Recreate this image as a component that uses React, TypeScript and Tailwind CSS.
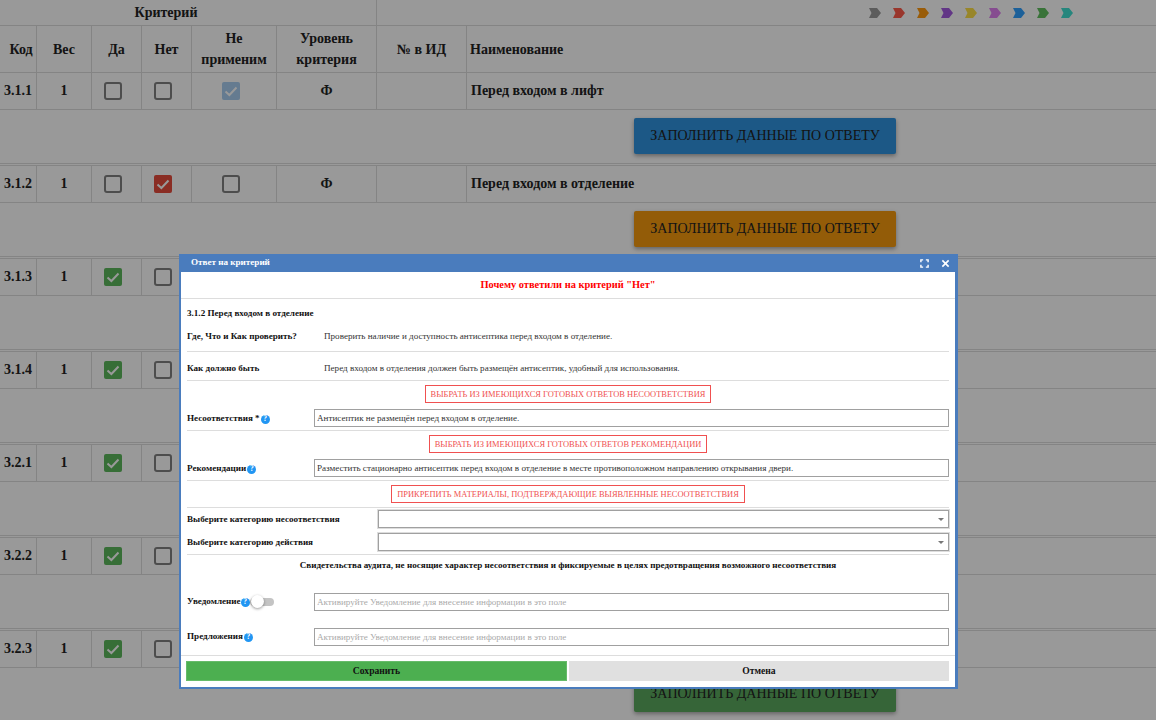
import React from "react";

type Mark = "none" | "yes" | "no" | "na";

const rows: { code: string; mark: Mark; name: string; btn: string }[] = [
  { code: "3.1.1", mark: "na", name: "Перед входом в лифт", btn: "bg-[#2f93e0]" },
  { code: "3.1.2", mark: "no", name: "Перед входом в отделение", btn: "bg-[#f59a0e]" },
  { code: "3.1.3", mark: "yes", name: "", btn: "bg-[#4caf50]" },
  { code: "3.1.4", mark: "yes", name: "", btn: "bg-[#4caf50]" },
  { code: "3.2.1", mark: "yes", name: "", btn: "bg-[#4caf50]" },
  { code: "3.2.2", mark: "yes", name: "", btn: "bg-[#4caf50]" },
  { code: "3.2.3", mark: "yes", name: "", btn: "bg-[#5aa85e]" },
];

const chevrons = ["#9a9a9a", "#ff5a4a", "#ff9a10", "#a45be0", "#fde047", "#e080f0", "#30a0ff", "#60c060", "#40e0d0"];

function Box({ kind }: { kind: "empty" | "green" | "red" | "blue" }) {
  if (kind === "empty") {
    return <span className="block h-[18px] w-[18px] rounded-[3px] border-2 border-[#808080] box-border" />;
  }
  const bg = kind === "green" ? "bg-[#5cb85c]" : kind === "red" ? "bg-[#e74c3c]" : "bg-[#a8cdf0]";
  return (
    <span className={`flex h-[18px] w-[18px] items-center justify-center rounded-[2px] ${bg}`}>
      <svg viewBox="0 0 18 18" className="h-[18px] w-[18px]" fill="none" stroke="#fff" strokeWidth="2">
        <path d="M3.5 9.5 L7.4 13 L14.5 5.5" />
      </svg>
    </span>
  );
}

function Help({ extra = "" }: { extra?: string }) {
  return (
    <span className={`inline-flex h-[9px] w-[9px] shrink-0 items-start justify-center rounded-full bg-[#2196f3] text-[7.5px] font-bold leading-[8px] text-white ${extra}`}>
      ?
    </span>
  );
}

function Cell({ w, children, extra = "" }: { w: string; children?: React.ReactNode; extra?: string }) {
  return <div className={`flex shrink-0 items-center justify-center border-r border-[#ddd] ${w} ${extra}`}>{children}</div>;
}

function Row({ r, last }: { r: (typeof rows)[number]; last: boolean }) {
  return (
    <div>
      <div className="flex h-[37px] border-b border-[#ddd] text-[14px]">
        <Cell w="w-[37px]" extra="pb-[2px] font-bold">{r.code}</Cell>
        <Cell w="w-[55px]" extra="pb-[2px] font-bold">1</Cell>
        <Cell w="w-[50px]" extra="pr-[7px]"><Box kind={r.mark === "yes" ? "green" : "empty"} /></Cell>
        <Cell w="w-[50px]" extra="pr-[7px]"><Box kind={r.mark === "no" ? "red" : "empty"} /></Cell>
        <Cell w="w-[85px]" extra="pr-[7px]">{r.mark === "yes" ? null : <Box kind={r.mark === "na" ? "blue" : "empty"} />}</Cell>
        <Cell w="w-[100px]" extra="pb-[2px] font-bold">{r.mark === "yes" ? "" : "Ф"}</Cell>
        <Cell w="w-[90px]" />
        <div className="flex flex-1 items-center pb-[2px] pl-[4px] font-bold">{r.name}</div>
      </div>
      <div className="flex h-[54px] items-start justify-center border-b border-[#ddd] pl-[374px] pt-[8px]">
        <button className={`flex h-[36px] w-[262px] items-center justify-center rounded-[2px] pb-[2px] text-[14px] text-[#222] shadow-[0_2px_4px_rgba(0,0,0,0.35)] ${r.btn}`}>
          ЗАПОЛНИТЬ ДАННЫЕ ПО ОТВЕТУ
        </button>
      </div>
      {last ? null : <div className="h-[2px] border-b border-[#ddd]" />}
    </div>
  );
}

function RedButton({ children, pb }: { children: React.ReactNode; pb: string }) {
  return (
    <div className={`flex justify-center pt-[4px] ${pb}`}>
      <button className="flex h-[18px] items-center border border-[#f05050] bg-white px-[5px] text-[8.45px] leading-none text-[#f05050]">
        {children}
      </button>
    </div>
  );
}

const inputCls =
  "h-[18px] min-w-0 flex-1 border border-[#a0a0a0] bg-white px-[2px] text-[9.1px] text-[#333] outline-none placeholder:text-[#aaa] font-['Liberation_Serif',serif]";

function Select() {
  return (
    <div className="relative h-[18px] min-w-0 flex-1 border border-[#a0a0a0] bg-white shadow-[0_0_0_1px_#ddd]">
      <span className="absolute right-[4px] top-[7px] h-0 w-0 border-x-[3.5px] border-t-[3.5px] border-x-transparent border-t-[#777]" />
    </div>
  );
}

export default function App() {
  return (
    <div className="relative h-[720px] w-[1156px] overflow-hidden bg-white font-['Liberation_Serif',serif] text-[#222]">
      {/* background table */}
      <div className="flex h-[26px] border-b border-[#ddd] text-[14px] font-bold">
        <div className="flex w-[377px] items-center justify-center border-r border-[#ddd] pr-[44px]">Критерий</div>
        <div className="flex flex-1 items-center gap-[12px] pl-[492px]">
          {chevrons.map((c) => (
            <svg key={c} viewBox="0 0 12 10" className="h-[10px] w-[12px]" fill={c}>
              <path d="M0 0 H8 L12 5 L8 10 H0 L2.5 5 Z" />
            </svg>
          ))}
        </div>
      </div>
      <div className="flex h-[47px] border-b border-[#ddd] text-[14px] font-bold leading-[21px]">
        <Cell w="w-[37px]" extra="pl-[6px]">Код</Cell>
        <Cell w="w-[55px]">Вес</Cell>
        <Cell w="w-[50px]">Да</Cell>
        <Cell w="w-[50px]">Нет</Cell>
        <Cell w="w-[85px]" extra="text-center">Не<br />применим</Cell>
        <Cell w="w-[100px]" extra="text-center">Уровень<br />критерия</Cell>
        <Cell w="w-[90px]">№ в ИД</Cell>
        <div className="flex flex-1 items-center pl-[3px]">Наименование</div>
      </div>
      {rows.map((r, i) => (
        <Row key={r.code} r={r} last={i === rows.length - 1} />
      ))}

      {/* dim overlay */}
      <div className="absolute inset-0 bg-black/40" />

      {/* dialog */}
      <div className="absolute left-[179px] top-[254px] flex h-[435px] w-[779px] flex-col overflow-hidden border-2 border-r-[3px] border-t-0 border-[#4a7cbd] bg-white text-[10px] text-[#111]">
        <div className="flex h-[18px] shrink-0 items-center justify-between bg-[#4a7cbd] pl-[10px] pr-[5px] text-[9.1px] font-bold text-white">
          <span>Ответ на критерий</span>
          <span className="flex items-center gap-[12px]">
            <svg viewBox="0 0 10 10" className="h-[9px] w-[9px]" fill="none" stroke="#fff" strokeWidth="1.6">
              <path d="M1 3.5 V1 H3.5 M6.5 1 H9 V3.5 M9 6.5 V9 H6.5 M3.5 9 H1 V6.5" />
            </svg>
            <svg viewBox="0 0 10 10" className="h-[9px] w-[9px]" fill="none" stroke="#fff" strokeWidth="1.8">
              <path d="M1.5 1.5 L8.5 8.5 M8.5 1.5 L1.5 8.5" />
            </svg>
          </span>
        </div>
        <div className="flex h-[27px] shrink-0 items-center justify-center border-b border-[#ddd] text-[10.4px] font-bold text-[#ff0000]">
          Почему ответили на критерий "Нет"
        </div>
        <div className="px-[6px]">
          <div className="h-[22px] pt-[8px] text-[9.1px] font-bold leading-[12px]">3.1.2 Перед входом в отделение</div>
          <div className="flex h-[31px] items-center border-b border-[#ddd] pt-[2px] text-[9.1px]">
            <span className="w-[137px] shrink-0 font-bold">Где, Что и Как проверить?</span>
            <span className="text-[#333]">Проверить наличие и доступность антисептика перед входом в отделение.</span>
          </div>
          <div className="flex h-[29px] items-center border-b border-[#ddd] pt-[5px] text-[9.1px]">
            <span className="w-[137px] shrink-0 font-bold">Как должно быть</span>
            <span className="text-[#333]">Перед входом в отделения должен быть размещён антисептик, удобный для использования.</span>
          </div>
          <RedButton pb="pb-[6px]">ВЫБРАТЬ ИЗ ИМЕЮЩИХСЯ ГОТОВЫХ ОТВЕТОВ НЕСООТВЕТСТВИЯ</RedButton>
          <div className="flex h-[22px] items-start border-b border-[#ddd]">
            <span className="flex h-[18px] w-[127px] shrink-0 items-center gap-[1px] pt-[2px] text-[9.1px] font-bold">Несоответствия * <Help /></span>
            <input readOnly className={inputCls} value="Антисептик не размещён перед входом в отделение." />
          </div>
          <RedButton pb="pb-[6px]">ВЫБРАТЬ ИЗ ИМЕЮЩИХСЯ ГОТОВЫХ ОТВЕТОВ РЕКОМЕНДАЦИИ</RedButton>
          <div className="flex h-[22px] items-start border-b border-[#ddd]">
            <span className="flex h-[18px] w-[127px] shrink-0 items-center pt-[2px] text-[9.1px] font-bold">Рекомендации<Help extra="ml-[1px]" /></span>
            <input readOnly className={inputCls} value="Разместить стационарно антисептик перед входом в отделение в месте противоположном направлению открывания двери." />
          </div>
          <div className="border-b border-[#ddd]">
            <RedButton pb="pb-[4px]">ПРИКРЕПИТЬ МАТЕРИАЛЫ, ПОДТВЕРЖДАЮЩИЕ ВЫЯВЛЕННЫЕ НЕСООТВЕТСТВИЯ</RedButton>
          </div>
          <div className="flex items-center pb-[5px] pt-[2px]">
            <span className="w-[191px] shrink-0 pt-[2px] text-[9.1px] font-bold">Выберите категорию несоответствия</span>
            <Select />
          </div>
          <div className="flex items-center border-b border-[#ddd] pb-[3px]">
            <span className="w-[191px] shrink-0 pt-[2px] text-[9.1px] font-bold">Выберите категорию действия</span>
            <Select />
          </div>
          <div className="flex h-[22px] items-center justify-center text-[9.1px] font-bold">
            Свидетельства аудита, не носящие характер несоответствия и фиксируемые в целях предотвращения возможного несоответствия
          </div>
          <div className="mt-[16px] flex items-center">
            <span className="flex h-[18px] w-[127px] shrink-0 items-center text-[9.1px] font-bold">
              Уведомление<Help />
              <span className="relative h-[8px] w-[24px] rounded-full bg-[#c4c4c4]">
                <span className="absolute left-[1px] top-[-3px] h-[13px] w-[13px] rounded-full bg-white shadow-[0_1px_3px_rgba(0,0,0,0.4)]" />
              </span>
            </span>
            <input readOnly className={inputCls} placeholder="Активируйте Уведомление для внесение информации в это поле" />
          </div>
          <div className="mt-[17px] flex items-center">
            <span className="flex h-[18px] w-[127px] shrink-0 items-center gap-[1px] text-[9.1px] font-bold">Предложения<Help /></span>
            <input readOnly className={inputCls} placeholder="Активируйте Уведомление для внесение информации в это поле" />
          </div>
        </div>
        <div className="mt-[9px] flex flex-1 items-start gap-[2px] border-t border-[#ddd] pl-[5px] pr-[6px] pt-[5px]">
          <button className="h-[20px] w-[381px] border border-[#66bb6a] bg-[#4caf50] text-[9.6px] font-bold text-[#111]">Сохранить</button>
          <button className="h-[20px] flex-1 bg-[#e0e0e0] text-[9.6px] font-bold text-[#111]">Отмена</button>
        </div>
      </div>
    </div>
  );
}
